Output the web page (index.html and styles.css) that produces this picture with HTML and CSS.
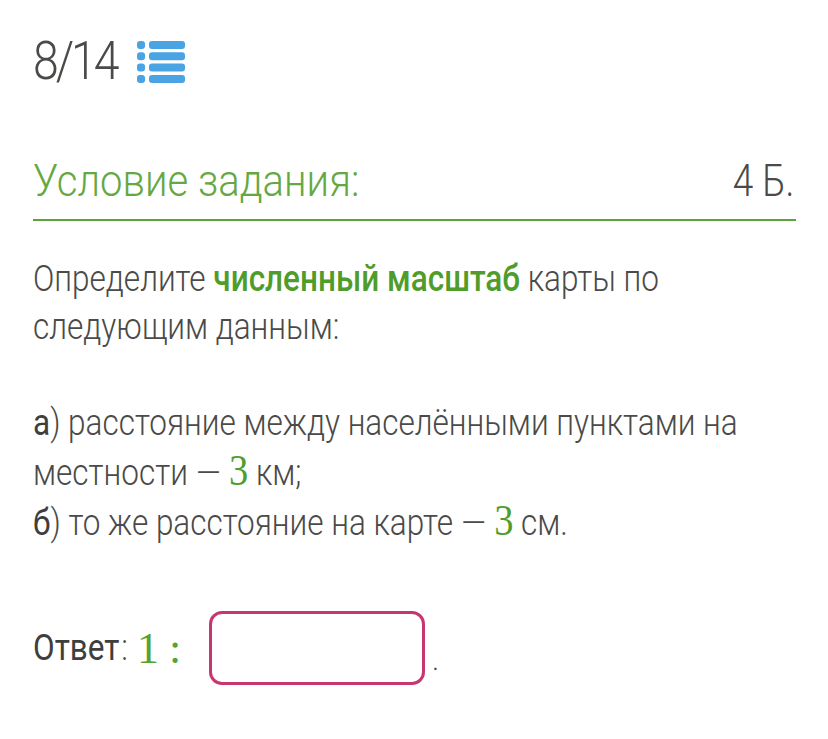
FILE: index.html
```html
<!DOCTYPE html>
<html lang="ru">
<head>
<meta charset="utf-8">
<link rel="stylesheet" href="styles.css">
</head>
<body>
<div class="page">
  <div class="counter">
    <span class="num cond">8/14</span>
    <svg class="list-icon" width="48" height="42" viewBox="0 0 48 42">
      <rect x="0" y="0" width="8" height="8" rx="3" fill="#4aa3e2"/>
      <rect x="12" y="0" width="36" height="8" rx="3" fill="#4aa3e2"/>
      <rect x="0" y="11.3" width="8" height="8" rx="3" fill="#4aa3e2"/>
      <rect x="12" y="11.3" width="36" height="8" rx="3" fill="#4aa3e2"/>
      <rect x="0" y="22.6" width="8" height="8" rx="3" fill="#4aa3e2"/>
      <rect x="12" y="22.6" width="36" height="8" rx="3" fill="#4aa3e2"/>
      <rect x="0" y="34" width="8" height="8" rx="3" fill="#4aa3e2"/>
      <rect x="12" y="34" width="36" height="8" rx="3" fill="#4aa3e2"/>
    </svg>
  </div>

  <div class="title-row">
    <span class="title cond">Условие задания:</span>
    <span class="points cond">4 Б.</span>
  </div>

  <p class="text cond">Определите <b class="hl">численный масштаб</b> карты по<br>следующим данным:</p>

  <p class="text list cond"><span class="mark">а</span>) расстояние между населёнными пунктами на<br>местности <span class="dash">–</span> <span class="math">3</span> км;<br><span class="mark">б</span>) то же расстояние на карте <span class="dash">–</span> <span class="math">3</span> см.</p>

  <div class="answer">
    <span class="label cond">Ответ<span class="colon">:</span></span>
    <span class="ratio"><span class="one">1</span><span class="sep">:</span></span>
    <span class="box"></span>
    <span class="dot">.</span>
  </div>
</div>
</body>
</html>
```

FILE: styles.css
```css
html, body {
  margin: 0;
  padding: 0;
  background: #ffffff;
  overflow: hidden;
}
.page {
  padding: 0 32px 0 33px;
  font-family: Roboto, "Noto Sans", sans-serif;
  font-weight: 300;
  color: #4a4a48;
  overflow: hidden;
}
.cond {
  transform: scaleX(0.875);
  transform-origin: 0 0;
}
.counter {
  display: flex;
  align-items: center;
  height: 122px;
}
.num {
  display: block;
  flex: 0 0 104px;
  min-width: 0;
  font-size: 53px;
  letter-spacing: -3.5px;
  color: #4a4a48;
  white-space: nowrap;
}
.list-icon {
  display: block;
  flex: 0 0 auto;
  margin-top: 1px;
}
.title-row {
  display: flex;
  justify-content: space-between;
  align-items: baseline;
  border-bottom: 2px solid #5ba33a;
  padding-top: 32px;
  padding-bottom: 12px;
}
.title {
  display: inline-block;
  font-size: 45px;
  color: #65a843;
  white-space: nowrap;
  transform: scaleX(0.89);
}
.points {
  display: inline-block;
  font-size: 44px;
  color: #4a4a48;
  transform: scaleX(0.84);
  transform-origin: 100% 0;
  white-space: nowrap;
  margin-right: 2px;
}
.text {
  display: block;
  width: 900px;
  white-space: nowrap;
  margin: 34px 0 0;
  font-size: 36px;
  line-height: 48px;
}
.text.list {
  margin-top: 48px;
}
.hl {
  font-weight: 500;
  color: #4f9c2b;
}
.mark {
  font-weight: 400;
  color: #3e3e3c;
}
.dash {
  display: inline-block;
  transform: scaleX(1.35);
  margin: 0 3px;
}
.math {
  font-family: "Liberation Serif", "DejaVu Serif", serif;
  font-weight: 400;
  color: #4f9e2c;
  font-size: 44px;
}
.answer {
  display: flex;
  align-items: center;
  margin-top: 64px;
}
.label {
  display: block;
  flex: 0 0 104px;
  min-width: 0;
  font-size: 36px;
  font-weight: 400;
  color: #3e3e3c;
  white-space: nowrap;
}
.colon {
  font-weight: 300;
  color: #4a4a48;
  margin-left: 2px;
}
.ratio {
  display: flex;
  flex: 0 0 72px;
  min-width: 0;
  align-items: baseline;
  font-family: "Liberation Serif", "DejaVu Serif", serif;
  color: #56a332;
  font-size: 44px;
}
.one {
  width: 32px;
  flex: 0 0 32px;
}
.box {
  display: block;
  flex: 0 0 auto;
  width: 210px;
  height: 68px;
  border: 3px solid #c83672;
  border-radius: 13px;
}
.dot {
  font-size: 30px;
  margin-left: 7px;
  margin-top: 22px;
}
```
